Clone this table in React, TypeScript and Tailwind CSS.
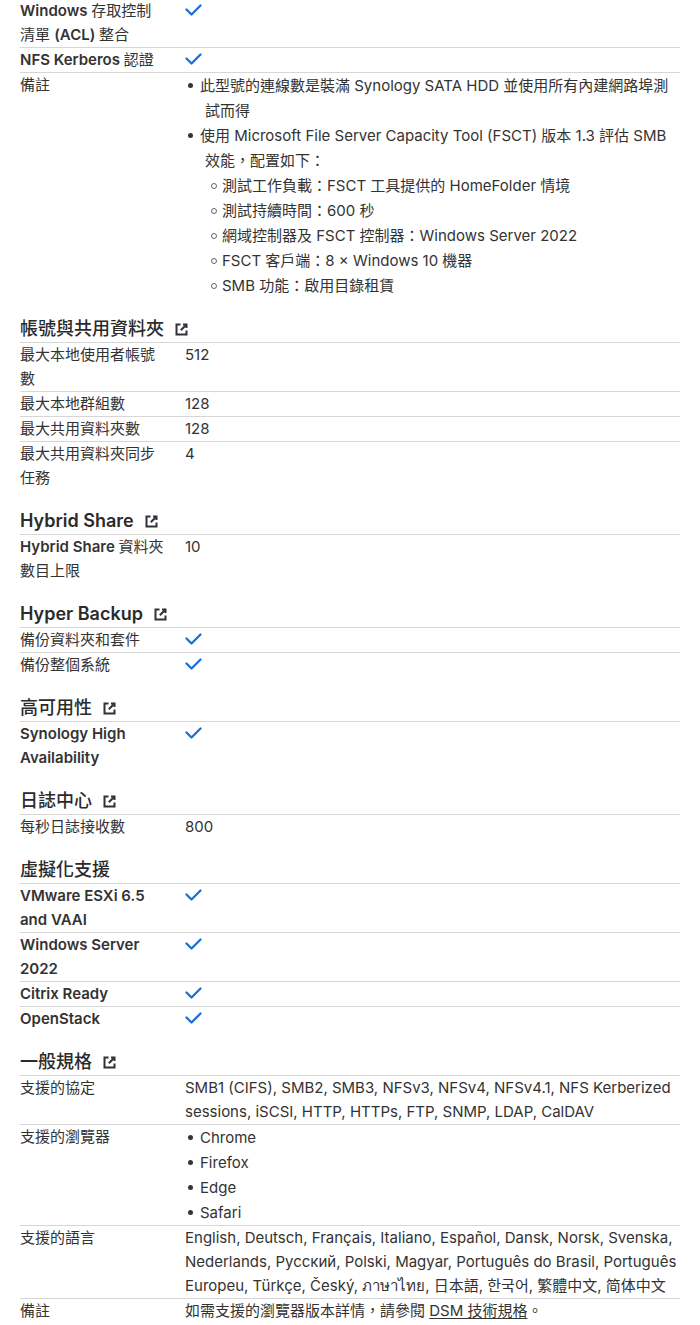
import React from 'react';

type Value =
  | { kind: 'check' }
  | { kind: 'text'; text: React.ReactNode }
  | { kind: 'list'; items: { text: string; sub?: string[] }[] };

type Row = { label: string; value: Value };
type Section = { title?: string; link?: boolean; rows: Row[] };

const check: Value = { kind: 'check' };

const sections: Section[] = [
  {
    rows: [
      { label: 'Windows 存取控制清單 (ACL) 整合', value: check },
      { label: 'NFS Kerberos 認證', value: check },
      {
        label: '備註',
        value: {
          kind: 'list',
          items: [
            { text: '此型號的連線數是裝滿 Synology SATA HDD 並使用所有內建網路埠測試而得' },
            {
              text: '使用 Microsoft File Server Capacity Tool (FSCT) 版本 1.3 評估 SMB 效能，配置如下：',
              sub: [
                '測試工作負載：FSCT 工具提供的 HomeFolder 情境',
                '測試持續時間：600 秒',
                '網域控制器及 FSCT 控制器：Windows Server 2022',
                'FSCT 客戶端：8 × Windows 10 機器',
                'SMB 功能：啟用目錄租賃',
              ],
            },
          ],
        },
      },
    ],
  },
  {
    title: '帳號與共用資料夾',
    link: true,
    rows: [
      { label: '最大本地使用者帳號數', value: { kind: 'text', text: '512' } },
      { label: '最大本地群組數', value: { kind: 'text', text: '128' } },
      { label: '最大共用資料夾數', value: { kind: 'text', text: '128' } },
      { label: '最大共用資料夾同步任務', value: { kind: 'text', text: '4' } },
    ],
  },
  {
    title: 'Hybrid Share',
    link: true,
    rows: [{ label: 'Hybrid Share 資料夾數目上限', value: { kind: 'text', text: '10' } }],
  },
  {
    title: 'Hyper Backup',
    link: true,
    rows: [
      { label: '備份資料夾和套件', value: check },
      { label: '備份整個系統', value: check },
    ],
  },
  {
    title: '高可用性',
    link: true,
    rows: [{ label: 'Synology High Availability', value: check }],
  },
  {
    title: '日誌中心',
    link: true,
    rows: [{ label: '每秒日誌接收數', value: { kind: 'text', text: '800' } }],
  },
  {
    title: '虛擬化支援',
    rows: [
      { label: 'VMware ESXi 6.5 and VAAI', value: check },
      { label: 'Windows Server 2022', value: check },
      { label: 'Citrix Ready', value: check },
      { label: 'OpenStack', value: check },
    ],
  },
  {
    title: '一般規格',
    link: true,
    rows: [
      {
        label: '支援的協定',
        value: {
          kind: 'text',
          text: 'SMB1 (CIFS), SMB2, SMB3, NFSv3, NFSv4, NFSv4.1, NFS Kerberized sessions, iSCSI, HTTP, HTTPs, FTP, SNMP, LDAP, CalDAV',
        },
      },
      {
        label: '支援的瀏覽器',
        value: {
          kind: 'list',
          items: [{ text: 'Chrome' }, { text: 'Firefox' }, { text: 'Edge' }, { text: 'Safari' }],
        },
      },
      {
        label: '支援的語言',
        value: {
          kind: 'text',
          text: 'English, Deutsch, Français, Italiano, Español, Dansk, Norsk, Svenska, Nederlands, Русский, Polski, Magyar, Português do Brasil, Português Europeu, Türkçe, Český, ภาษาไทย, 日本語, 한국어, 繁體中文, 简体中文',
        },
      },
      {
        label: '備註',
        value: {
          kind: 'text',
          text: (
            <>
              如需支援的瀏覽器版本詳情，請參閱 <span className="underline underline-offset-2">DSM 技術規格</span>。
            </>
          ),
        },
      },
    ],
  },
];

// latin runs are semibold, CJK stays regular (the CJK face in the reference has no bold)
function Mixed({ text, cjk }: { text: string; cjk?: string }) {
  const parts = text.split(/([A-Za-z0-9().][A-Za-z0-9(). ]*)/).filter(Boolean);
  return (
    <>
      {parts.map((p, i) =>
        /[A-Za-z0-9]/.test(p) ? (
          <span key={i} className="font-semibold">{p}</span>
        ) : cjk ? (
          <span key={i} className={cjk}>{p}</span>
        ) : (
          <React.Fragment key={i}>{p}</React.Fragment>
        ),
      )}
    </>
  );
}

function CheckIcon() {
  return (
    <svg width="17" height="13" viewBox="0 0 17 13" className="mt-[5px]">
      <path d="M1.5 5.5L6.5 10.5L15.5 1.5" fill="none" stroke="#1b6fd6" strokeWidth="2.3" strokeLinecap="round" strokeLinejoin="round" />
    </svg>
  );
}

function LinkIcon() {
  return (
    <svg width="15" height="15" viewBox="0 0 15 15" className="shrink-0">
      <path d="M6.5 2.5H2.5V12.5H12.5V8.5" fill="none" stroke="#2f3337" strokeWidth="2" />
      <path d="M9 2.5H12.5V6" fill="none" stroke="#2f3337" strokeWidth="2" />
      <path d="M12.5 2.5L6.8 8.2" fill="none" stroke="#2f3337" strokeWidth="2" />
    </svg>
  );
}

function ValueCell({ value }: { value: Value }) {
  if (value.kind === 'check') return <CheckIcon />;
  if (value.kind === 'text') return <p className="leading-6">{value.text}</p>;
  return (
    <ul>
      {value.items.map(item => (
        <li key={item.text} className="relative pl-5 -indent-[5px] leading-[25px]">
          <span className="absolute left-[3px] top-[10px] h-[5px] w-[5px] rounded-full bg-[#333]" />
          {item.text}
          {item.sub && (
            <ul className="indent-0">
              {item.sub.map(s => (
                <li key={s} className="relative pl-[17px] leading-[25px]">
                  <span className="absolute left-[6px] top-[10px] h-[6px] w-[6px] rounded-full border border-[#666]" />
                  {s}
                </li>
              ))}
            </ul>
          )}
        </li>
      ))}
    </ul>
  );
}

export default function App() {
  return (
    <div className="min-h-[1325px] bg-white px-5 font-['Inter','Noto_Sans_CJK_TC','Noto_Sans',sans-serif] text-[15px] text-[#333]">
      {sections.map((section, si) => (
        <section key={si} className={section.title ? 'mt-[18px]' : '-mt-px'}>
          {section.title && (
            <h3 className="flex items-center gap-[10px] border-b border-[#d6d6d6] text-[18px] leading-[26px] text-[#2b2b2b]">
              <span>
                <Mixed text={section.title} cjk="font-medium" />
              </span>
              {section.link && <LinkIcon />}
            </h3>
          )}
          <div className="divide-y divide-[#d6d6d6]">
            {section.rows.map((row, ri) => (
              <div key={ri} className="grid grid-cols-[165px_1fr]">
                <div className="pr-[21px] leading-6 text-[#333]">
                  <Mixed text={row.label} />
                </div>
                <div>
                  <ValueCell value={row.value} />
                </div>
              </div>
            ))}
          </div>
        </section>
      ))}
    </div>
  );
}
